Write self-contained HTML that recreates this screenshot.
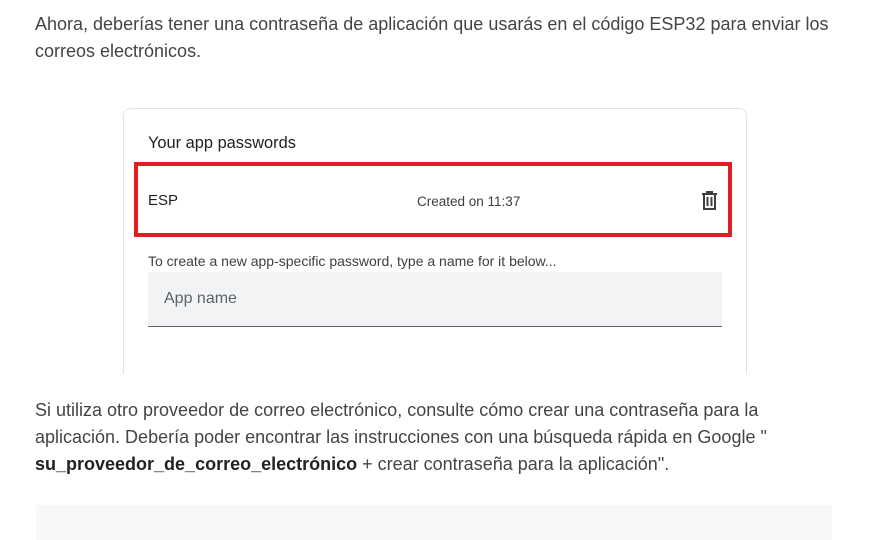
<!DOCTYPE html>
<html><head><meta charset="utf-8"><style>
body{margin:0;width:874px;height:540px;background:#fff;overflow:hidden;position:relative;font-family:"Liberation Sans",Arial,sans-serif;}
.p{position:absolute;left:35px;font-size:18px;color:#444;line-height:27px;letter-spacing:0;white-space:nowrap;}
.card{position:absolute;left:123px;top:108px;width:622px;height:290px;border:1px solid #e3e3e3;border-radius:8px;}
.t{position:absolute;font-family:"Liberation Sans",sans-serif;white-space:nowrap;}
</style></head><body>
<div class="p" style="top:11px">Ahora, deberías tener una contraseña de aplicación que usarás en el código ESP32 para enviar los</div>
<div class="p" style="top:38px">correos electrónicos.</div>
<div class="card"></div>
<div style="position:absolute;left:0;top:374px;width:874px;height:30px;background:#fff"></div>
<div class="t" style="left:148px;top:134px;font-size:16.4px;color:#202124">Your app passwords</div>
<div style="position:absolute;left:134px;top:162px;width:590px;height:67px;border:4px solid #e31b23"></div>
<div class="t" style="left:148px;top:192px;font-size:15px;color:#202124">ESP</div>
<div class="t" style="left:417px;top:194px;font-size:13.5px;color:#3c4043">Created on 11:37</div>
<svg style="position:absolute;left:701px;top:191px" width="17" height="19" viewBox="0 0 17 19"><path d="M1 3h15M6 3V1h5v2M3 3v15h11V3M6.5 6v9M10.5 6v9" stroke="#3c4043" stroke-width="2" fill="none"/></svg>
<div class="t" style="left:148px;top:253px;font-size:14px;color:#3c4043">To create a new app-specific password, type a name for it below...</div>
<div style="position:absolute;left:148px;top:272px;width:574px;height:54px;background:#f1f3f4;border-bottom:1px solid #5f6368"></div>
<div class="t" style="left:164px;top:290px;font-size:16px;color:#5f6368">App name</div>
<div class="p" style="top:397px">Si utiliza otro proveedor de correo electrónico, consulte cómo crear una contraseña para la</div>
<div class="p" style="top:424px">aplicación. Debería poder encontrar las instrucciones con una búsqueda rápida en Google "</div>
<div class="p" style="top:451px"><b style="color:#222">su_proveedor_de_correo_electrónico</b> + crear contraseña para la aplicación".</div>
<div style="position:absolute;left:36px;top:505px;width:796px;height:35px;background:#f8f8f8"></div>
</body></html>
